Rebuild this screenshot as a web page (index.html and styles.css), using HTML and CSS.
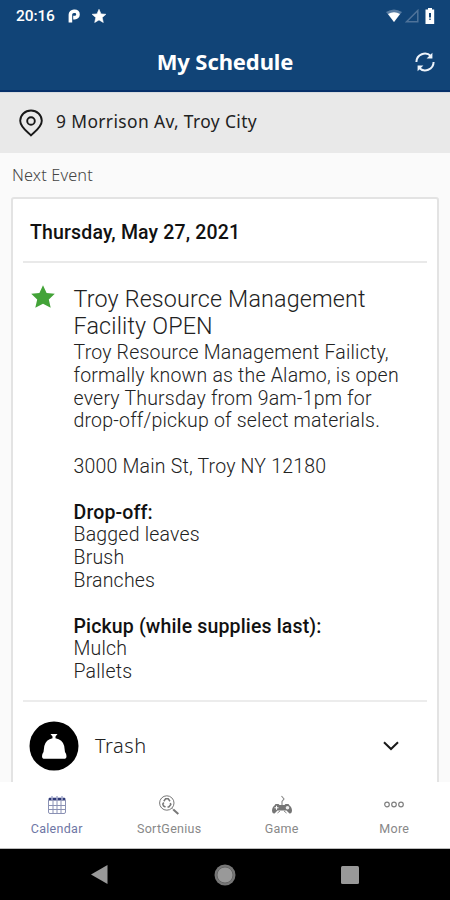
FILE: index.html
```html
<!DOCTYPE html>
<html lang="en">
<head>
<meta charset="utf-8">
<title>My Schedule</title>
<link rel="stylesheet" href="styles.css">
</head>
<body>
<div class="screen">
  <header class="top">
    <div class="status">
      <span class="clock">20:16</span>
      <svg class="parking" width="12" height="14" viewBox="0 0 12 14"><path d="M2.400 13.500V5.800A3.500 3.500 0 0 1 6 2.200h.8a3.200 3.200 0 0 1 0 6.400H5.200" fill="none" stroke="#fff" stroke-width="3.600"/></svg>
      <svg class="fav" width="14" height="14" viewBox="0 0 14 14"><path fill="#fff" stroke="#fff" stroke-width=".6" d="M7 .3l2 4.600 4.900.4-3.700 3.300 1.100 4.900L7 10.900l-4.300 2.600 1.100-4.900L.1 5.300 5 4.900z"/></svg>
      <span class="gap"></span>
      <svg width="16" height="14" viewBox="0 0 16 14"><path fill="#597da3" d="M0 3Q8-2 16 3L8 13z"/><path fill="#fff" d="M2 5Q8 1.500 14 5L8 13z"/></svg>
      <svg class="signal" width="14" height="14" viewBox="0 0 14 14"><path d="M1.500 12.800H12.800V1.500z" fill="none" stroke="#4f739a" stroke-width="1.500"/></svg>
      <svg class="battery" width="10" height="16" viewBox="0 0 10 16"><path fill="#fff" d="M3 0h4v1.500h2.200V16H.5V1.500H3z"/><path d="M4 5h2v4.500H4zM4.300 10.500h1.400v1.500H4.300z" fill="#114477"/></svg>
    </div>
    <div class="bar">
      <h1>My Schedule</h1>
      <svg class="sync" width="20" height="20" viewBox="0 0 20 20"><g fill="none" stroke="#eef4fb" stroke-width="2"><path d="M1.400 10A8.500 8.500 0 0 1 16 4.200"/><path d="M18.600 10A8.500 8.500 0 0 1 4 15.800"/></g><path fill="#eef4fb" d="M17.400.8v5.800h-5.800zM2.600 19.200v-5.800h5.800z"/></svg>
    </div>
  </header>
  <div class="address">
    <svg width="24" height="28" viewBox="0 0 24 28"><g fill="none" stroke="#181818" stroke-width="1.900"><path d="M12 26.500C9.500 23.500 1.200 18.500 1.200 11.800a10.800 10.300 0 0 1 21.600 0C22.800 18.500 14.500 23.500 12 26.500z" stroke-linejoin="round"/><circle cx="12" cy="12" r="3.800"/></g></svg>
    <span class="street">9 Morrison Av, Troy City</span>
  </div>
  <main>
    <h2>Next Event</h2>
    <section class="card">
      <div class="date">Thursday, May 27, 2021</div>
      <article class="event">
        <svg width="24" height="24" viewBox="0 0 24 24"><path fill="#43a338" d="M12 .2l3.600 7.800 8.200.8-6 5.700 1.900 8.300L12 18.700l-7.700 4.100 1.900-8.300-6-5.700L8.400 8z"/></svg>
        <div class="details">
          <h3>Troy Resource Management<br>Facility OPEN</h3>
          <p>Troy Resource Management Failicty,<br>formally known as the Alamo, is open<br>every Thursday from 9am-1pm for<br>drop-off/pickup of select materials.</p>
          <p>3000 Main St, Troy NY 12180</p>
          <p><b>Drop-off:</b><br>Bagged leaves<br>Brush<br>Branches</p>
          <p><b>Pickup (while supplies last):</b><br>Mulch<br>Pallets</p>
        </div>
      </article>
      <div class="trash">
        <svg width="50" height="50" viewBox="0 0 50 50"><circle cx="25" cy="25" r="24.500" fill="#000"/><path fill="#fff" d="M21.500 13h7l-2 2.500v1.800q7 1.200 8.700 7.700l.8 6q1.500 2 1.500 4.200t-1.500 2.500H14.500q-1.500-.3-1.500-2.500T14.500 31l.8-6q1.700-6.500 8.200-7.700v-1.800z"/></svg>
        <span class="label">Trash</span>
        <svg class="chevron" width="16" height="10" viewBox="0 0 16 10"><path d="M1 1.200l7 6.800 7-6.800" fill="none" stroke="#1a1a1a" stroke-width="2"/></svg>
      </div>
    </section>
  </main>
  <nav class="tabs">
    <div class="tab active">
      <svg width="20" height="20" viewBox="0 0 20 20"><g fill="none" stroke="#8a91b4" stroke-width="1"><rect x="1.500" y="3" width="17" height="15.500" rx="1.500"/><path d="M2 10.500h16M2 14.500h16M6 6v12.500M10 6v12.500M14 6v12.500"/></g><path fill="#303b78" d="M2 3h16v2.500H2z"/><path d="M5 1v4M10 1v4M15 1v4" stroke="#aab0cf" stroke-width="1.500"/></svg>
      <span>Calendar</span>
    </div>
    <div class="tab">
      <svg width="20" height="20" viewBox="0 0 20 20"><g fill="none" stroke="#777"><circle cx="7.800" cy="8" r="7.200"/><path d="M4.800 6.300l1.800-2.500h2.600l1.800 2.500M11.300 8l.5 1.500-2 2.500H8.500M6.500 12l-2-1L3.800 9l1-1.500" stroke-width="1.500"/><path d="M13 13.300l1.200 1.200"/><path d="M14.300 14.500l5 4.500" stroke-width="2"/></g></svg>
      <span>SortGenius</span>
    </div>
    <div class="tab">
      <svg width="20" height="20" viewBox="0 0 20 20"><path d="M10 10V6.500l2-2.500-2.500-3" fill="none" stroke="#888" stroke-width="1.100"/><path fill="#757575" d="M3.500 9h3l1 1h5l1-1h3l1 1.500q2.500 1.500 2.500 5.500-.5 3-2.500 2.500L14.500 15.500h-9L2.500 18.500Q.5 19 0 16q0-4 2.500-5.500z"/><path d="M4.500 10.800v4M2.500 12.800h4" stroke="#fff"/><circle cx="15.500" cy="12.800" r="1.800" fill="#eee"/><path d="M5.500 18l2.500-2M14.500 18L12 16" stroke="#888"/></svg>
      <span>Game</span>
    </div>
    <div class="tab">
      <svg width="20" height="20" viewBox="0 0 20 20"><g fill="none" stroke="#808080" stroke-width="1.200"><circle cx="3" cy="9.500" r="2.300"/><circle cx="10" cy="9.500" r="2.300"/><circle cx="17" cy="9.500" r="2.300"/></g></svg>
      <span>More</span>
    </div>
  </nav>
  <footer class="system">
    <svg width="17" height="19" viewBox="0 0 17 19"><path fill="#999" d="M0 9.500L16.500 0v19z"/></svg>
    <svg width="22" height="22" viewBox="0 0 22 22"><circle cx="11" cy="11" r="10.500" fill="#777"/><circle cx="11" cy="11" r="8" fill="#999" stroke="#666"/></svg>
    <svg width="18" height="18" viewBox="0 0 18 18"><rect width="18" height="18" rx="1.500" fill="#999"/></svg>
  </footer>
</div>
</body>
</html>
```
FILE: styles.css
```css
* { box-sizing: border-box; }
body { margin: 0; }
h1, h2, h3, p { margin: 0; font-weight: inherit; }
svg { display: block; flex: none; }
.screen {
  width: 450px;
  height: 900px;
  display: flex;
  flex-direction: column;
  overflow: hidden;
  background: #fafafa;
  font-family: Roboto, sans-serif;
  color: #222;
}
.top { height: 92px; flex: none; background: #114477; border-bottom: 2px solid #07306a; color: #fff; }
.status { height: 32px; display: flex; align-items: center; padding: 0 15px 0 16px; }
.clock { width: 39px; font-size: 15.5px; font-weight: 500; letter-spacing: -.1px; white-space: nowrap; }
.parking { margin-left: 13px; }
.fav { margin-left: 12px; }
.gap { flex: 1; }
.signal { margin-left: 3px; }
.battery { margin-left: 6px; }
.bar { height: 60px; display: grid; grid-template-columns: 50px 1fr 50px; align-items: center; }
h1 { grid-column: 2; margin-bottom: 2px; text-align: center; font: 700 22px/28px "Noto Sans", sans-serif; letter-spacing: -.1px; }
.sync { justify-self: center; }
.address { height: 61px; flex: none; display: flex; align-items: center; padding: 0 19px; gap: 13px; background: #e9e9e9; border-top: 1px solid #d8dbe0; }
.street { margin-bottom: 4px; font: 17.4px/24px "Noto Sans", sans-serif; letter-spacing: .38px; }
main { flex: 1; min-height: 0; overflow: hidden; padding: 0 11px; }
h2 { height: 44px; padding: 11px 0 0 1px; font: 300 16.3px/23px "Noto Sans", sans-serif; letter-spacing: .15px; color: #444; }
.card { height: 700px; background: #fff; border: 2px solid #e3e3e3; border-radius: 3px; padding: 0 10px; }
.date { height: 64px; border-bottom: 2px solid #e9e9e9; padding: 22px 7px 0; font-size: 19.5px; line-height: 24px; font-weight: 500; letter-spacing: .15px; color: #111; }
.event { height: 439px; display: flex; gap: 19px; padding: 22px 7px 0 7.5px; border-bottom: 2px solid #ececec; }
.details { padding-top: 1px; font-weight: 300; white-space: nowrap; }
h3 { margin-bottom: 1.6px; font-size: 23.300px; line-height: 27.200px; letter-spacing: .17px; }
.details p { font-size: 19.500px; line-height: 22.800px; letter-spacing: .2px; }
.details p + p { margin-top: 22.800px; }
b { font-weight: 500; letter-spacing: .15px; color: #111; }
.trash { height: 88px; display: flex; align-items: center; padding: 0 28px 0 6px; }
.label { margin-left: 16px; font: 300 20px/26px "Noto Sans", sans-serif; letter-spacing: .5px; color: #222; }
.chevron { margin-left: auto; }
.tabs { height: 67px; flex: none; background: #fff; display: grid; grid-template-columns: repeat(4, 1fr); border-bottom: 1px solid #bbb; }
.tab { display: flex; flex-direction: column; align-items: center; padding: 13px 0 0 1px; gap: 5px; font-size: 12.500px; line-height: 17px; letter-spacing: .3px; color: #888; }
.active { color: #6e76a4; }
.system { height: 51px; flex: none; background: #000; display: flex; align-items: center; justify-content: space-between; padding: 0 91px; }
```
